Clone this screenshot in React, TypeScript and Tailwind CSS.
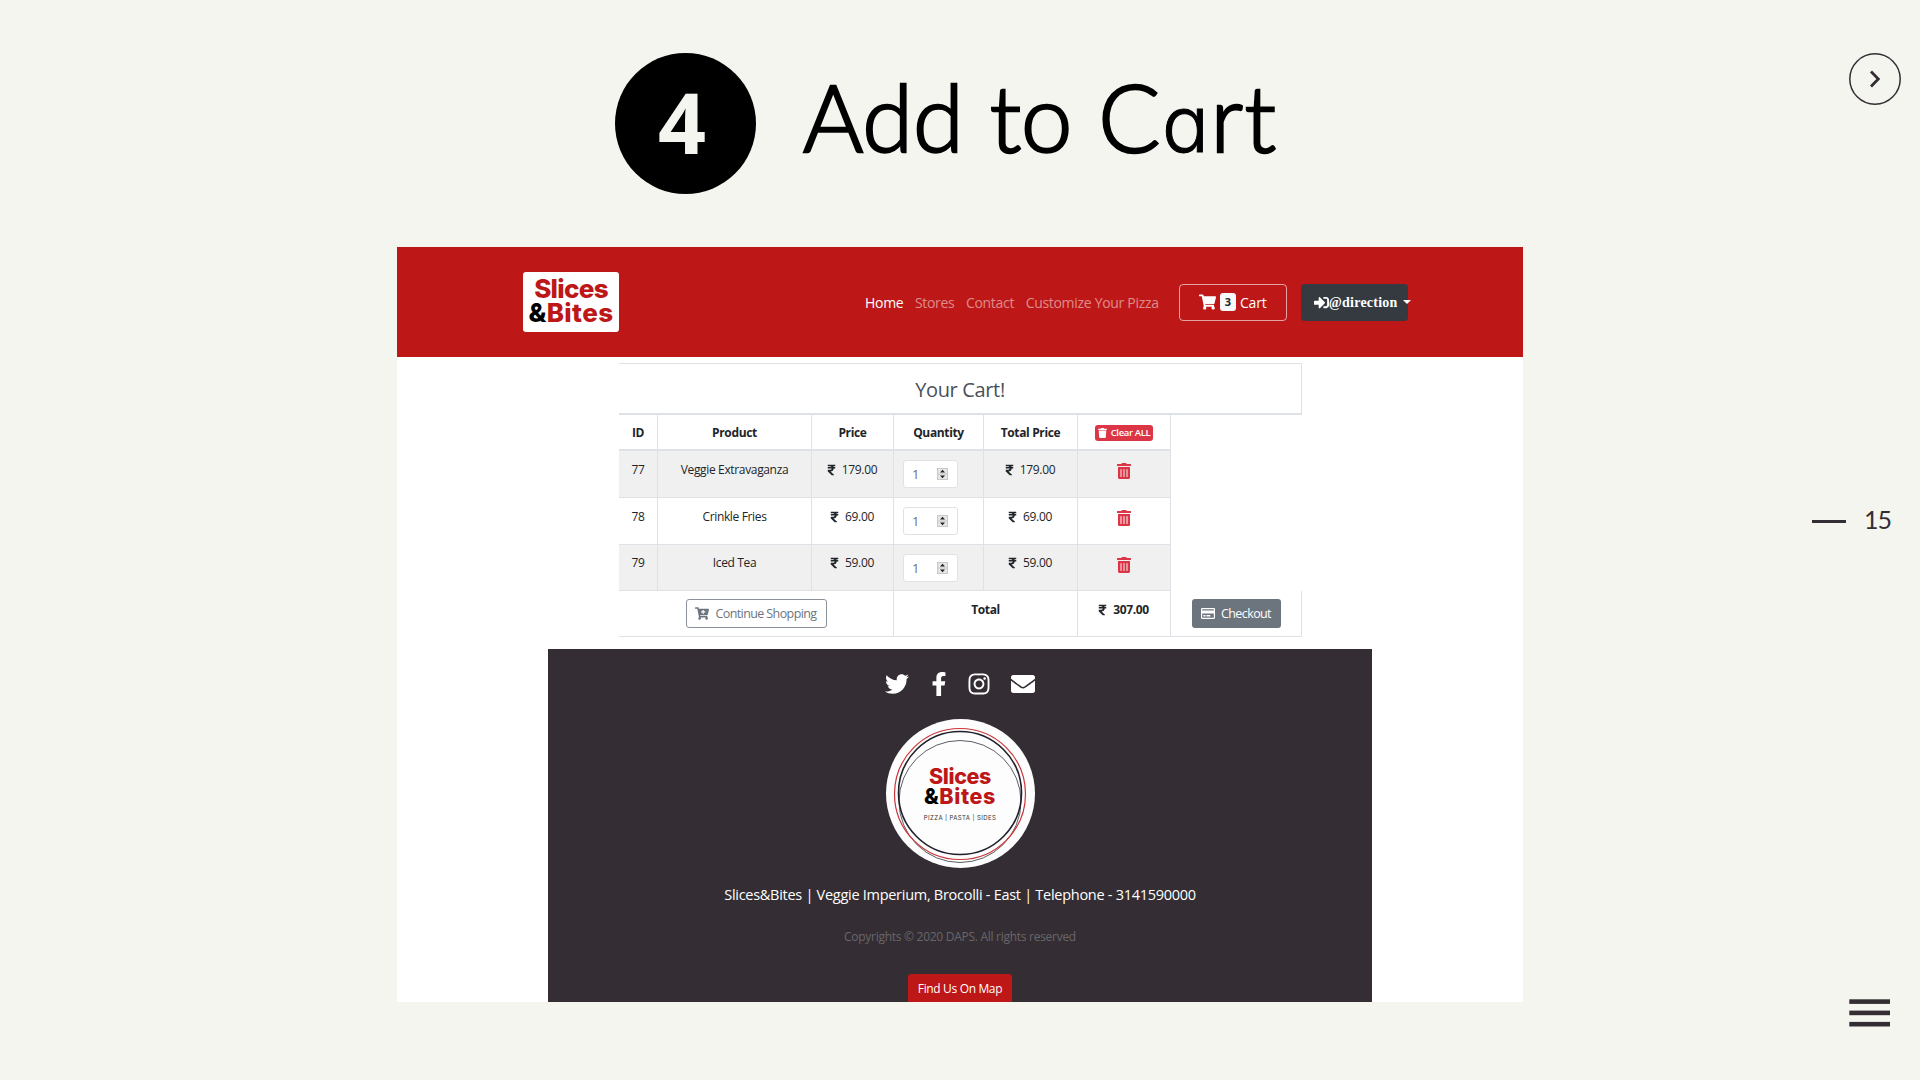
import type { ReactNode } from "react";
import {
  FaShoppingCart, FaSignInAlt, FaTrash, FaTrashAlt, FaRupeeSign, FaCartPlus,
  FaRegCreditCard, FaTwitter, FaFacebookF, FaInstagram, FaEnvelope,
} from "react-icons/fa";

function T({ children, className = "" }: { children: ReactNode; className?: string }) {
  return <span className={`whitespace-nowrap ${className}`}>{children}</span>;
}

const rows = [
  { id: "77", name: "Veggie Extravaganza", price: "179.00", shade: "bg-[#f0f0f0]", height: "h-[47px]", pad: "pt-[10px]" },
  { id: "78", name: "Crinkle Fries", price: "69.00", shade: "bg-white", height: "h-[47px]", pad: "pt-[10px]" },
  { id: "79", name: "Iced Tea", price: "59.00", shade: "bg-[#f0f0f0]", height: "h-[46px]", pad: "pt-[9px]" },
];

function Amount({ value }: { value: string }) {
  return (
    <span className="flex items-center gap-[6px] pr-px">
      <FaRupeeSign className="h-[12px] w-[9px]" />
      <T>{value}</T>
    </span>
  );
}

function Quantity() {
  return (
    <div className="mt-[9px] ml-[9px] flex h-[28px] w-[55px] items-center justify-between rounded-[3px] border border-[#dfe3e7] bg-white pr-[9px] pl-[8px] text-[13px] text-[#6b737b]">
      <T className="pt-[2px]">1</T>
      <svg viewBox="0 0 11 12" className="h-[12px] w-[11px]">
        <rect width="11" height="12" fill="#c9c9c9" />
        <rect x="1" y="1" width="9" height="4.5" fill="#e6e6e6" />
        <rect x="1" y="6.5" width="9" height="4.5" fill="#e6e6e6" />
        <path d="M3 4.6 5.5 1.7 8 4.6ZM3 7.4 5.5 10.3 8 7.4Z" fill="#222" />
      </svg>
    </div>
  );
}

const line = "border-r border-[#dee2e6]";

export default function App() {
  return (
    <main className="flex h-[1080px] w-[1920px] overflow-hidden bg-[#f4f5ef] pl-[397px] font-['Open_Sans',sans-serif] text-black">
      <div className="w-[1126px] shrink-0">
        <header className="flex h-[247px] pt-[53px] pl-[218px]">
          <div className="flex size-[141px] items-center justify-center rounded-full bg-black pr-[7px] pb-[3px] text-[84px] leading-none font-bold text-[#f4f5ef]">
            <T>4</T>
          </div>
          <h1 className="ml-[47px] flex gap-[26px] pt-[9px] font-['Lato',sans-serif] text-[92px] leading-[110px] font-light whitespace-nowrap [-webkit-text-stroke:2.4px_black]">
            <T>Add</T>
            <T>to</T>
            <T className="tracking-[1.5px]">C<span className="font-['Inter',sans-serif] text-[78px] [-webkit-text-stroke:1px_black] [font-feature-settings:'cv11']">a</span>rt</T>
          </h1>
        </header>

        <section className="h-[755px] overflow-hidden bg-white">
          <nav className="flex h-[110px] items-center bg-[#bd1717] pl-[126px] text-[14px] text-white">
            <div className="flex h-[60px] w-[96px] shrink-0 flex-col items-center rounded-[3px] bg-white pt-[5px] font-['Inter',sans-serif] text-[26px] leading-[24px] font-extrabold tracking-[-0.7px] text-[#bd1717]">
              <T>Slices</T>
              <T className="tracking-[0.4px]"><span className="text-black">&amp;</span>Bites</T>
            </div>
            <div className="ml-[246px] flex gap-[11.5px] tracking-[-0.3px] text-white/50">
              <T className="text-white">Home</T>
              <T>Stores</T>
              <T>Contact</T>
              <T>Customize Your Pizza</T>
            </div>
            <div className="ml-[20px] flex h-[37px] w-[108px] shrink-0 items-center justify-center gap-[4px] rounded-[4px] border border-white/60">
              <FaShoppingCart className="h-[16px] w-[17px]" />
              <span className="flex h-[18px] w-[16px] items-center justify-center rounded-[3px] bg-[#f8f9fa] text-[11px] font-bold text-[#212529]">3</span>
              <T className="tracking-[-0.2px]">Cart</T>
            </div>
            <div className="ml-[14px] flex h-[37px] w-[107px] shrink-0 items-center rounded-[4px] bg-[#343a40] pl-[13px] font-['Liberation_Serif',serif] text-[14px] font-bold tracking-[0.25px]">
              <FaSignInAlt className="size-[15px] shrink-0" />
              <T>@direction</T>
              <svg viewBox="0 0 8 4" className="ml-[5px] h-[4px] w-[8px] shrink-0"><path d="M0 0h8L4 4Z" fill="white" /></svg>
            </div>
          </nav>

          <div className="mt-[6px] ml-[222px] w-[683px] text-[12px] tracking-[-0.35px] text-[#212529]">
            <div className="flex h-[52px] items-center justify-center border-t border-r border-b-2 border-[#dee2e6] pt-[2px] text-[20px] text-[#495057]">
              <T>Your Cart!</T>
            </div>
            <div className="grid h-[36px] w-[552px] grid-cols-[39px_154px_82px_90px_94px_93px] border-b-2 border-[#dee2e6] font-bold *:flex *:items-center *:justify-center *:pt-[2px]">
              <div className={line}><T>ID</T></div>
              <div className={line}><T>Product</T></div>
              <div className={line}><T>Price</T></div>
              <div className={line}><T>Quantity</T></div>
              <div className={line}><T>Total Price</T></div>
              <div className={line}>
                <button className="flex h-[16px] w-[58px] items-center justify-center gap-[4px] rounded-[3px] bg-[#dc3545] text-[9.5px] font-semibold text-white">
                  <FaTrash className="h-[10px] w-[9px]" /><T>Clear ALL</T>
                </button>
              </div>
            </div>
            {rows.map((r) => (
              <div key={r.id} className={`grid w-[552px] grid-cols-[39px_154px_82px_90px_94px_93px] border-b border-[#dee2e6] ${r.shade} ${r.height}`}>
                <div className={`flex justify-center ${r.pad} ${line}`}><T>{r.id}</T></div>
                <div className={`flex justify-center ${r.pad} ${line}`}><T>{r.name}</T></div>
                <div className={`flex items-start justify-center ${r.pad} ${line}`}><Amount value={r.price} /></div>
                <div className={line}><Quantity /></div>
                <div className={`flex items-start justify-center ${r.pad} ${line}`}><Amount value={r.price} /></div>
                <div className={`flex justify-center pt-[12px] text-[#dc3545] ${line}`}><FaTrashAlt className="h-[16px] w-[14px]" /></div>
              </div>
            ))}
            <div className="grid h-[46px] grid-cols-[275px_184px_93px_131px] border-b border-[#dee2e6]">
              <div className={`flex justify-center pt-[8px] ${line}`}>
                <button className="flex h-[29px] w-[141px] items-center justify-center gap-[6px] rounded-[3px] border border-[#8b9299] text-[12.5px] tracking-[-0.6px] text-[#6c757d]">
                  <FaCartPlus className="h-[13px] w-[14px]" /><T className="pt-[2px]">Continue Shopping</T>
                </button>
              </div>
              <div className={`flex justify-center pt-[10px] font-bold ${line}`}><T>Total</T></div>
              <div className={`flex items-start justify-center pt-[10px] font-bold ${line}`}><Amount value="307.00" /></div>
              <div className={`flex justify-center pt-[8px] ${line}`}>
                <button className="flex h-[29px] w-[89px] items-center justify-center gap-[6px] rounded-[3px] bg-[#6c757d] text-[12.5px] tracking-[-0.6px] text-white">
                  <FaRegCreditCard className="h-[13px] w-[14px]" /><T className="pt-[2px]">Checkout</T>
                </button>
              </div>
            </div>
          </div>

          <footer className="mt-[12px] ml-[151px] flex h-[354px] w-[824px] flex-col items-center bg-[#342e34] text-white">
            <div className="mt-[23px] flex h-[24px] items-center">
              <FaTwitter className="size-[24px]" />
              <FaFacebookF className="ml-[17.5px] size-[24px]" />
              <FaInstagram className="ml-[16px] size-[24px]" />
              <FaEnvelope className="ml-[20.5px] size-[24px]" />
            </div>
            <div className="relative mt-[23px] flex size-[149px] shrink-0 flex-col items-center rounded-full bg-[#fdfdfd] pt-[47px] font-['Inter',sans-serif] text-[21.5px] leading-[20px] font-extrabold tracking-[-0.4px] text-[#bd1717]">
              <svg viewBox="0 0 149 149" className="absolute inset-0 size-[149px]" fill="none">
                <circle cx="74" cy="82.5" r="61" stroke="#333341" strokeWidth=".8" />
                <circle cx="74" cy="75" r="65.5" stroke="#cb3438" strokeWidth="1.2" />
                <circle cx="74" cy="74" r="61.5" stroke="#20202c" strokeWidth="1.6" />
              </svg>
              <T>Slices</T>
              <T className="tracking-[0.6px]"><span className="text-black">&amp;</span>Bites</T>
              <T className="mt-[2px] text-[6px] font-normal tracking-[.4px] text-[#333]">PIZZA | PASTA | SIDES</T>
            </div>
            <p className="mt-[16px] text-[14.5px] leading-[22px] tracking-[-0.28px]"><T>Slices&amp;Bites | Veggie Imperium, Brocolli - East | Telephone - 3141590000</T></p>
            <p className="mt-[22px] text-[12px] leading-[18px] tracking-[-0.28px] text-[#696669]"><T>Copyrights © 2020 DAPS. All rights reserved</T></p>
            <button className="mt-[28px] h-[30px] w-[104px] shrink-0 rounded-[3px] bg-[#bd1717] text-[12px] tracking-[-0.35px]"><T>Find Us On Map</T></button>
          </footer>
        </section>
      </div>

      <aside className="flex flex-1 flex-col items-end pt-[53px] text-[#342e34]">
        <svg viewBox="0 0 52 52" className="mr-[19px] size-[52px]" fill="none" stroke="currentColor">
          <circle cx="26" cy="26" r="25.2" strokeWidth="1.5" />
          <path d="M22 18.5 29.3 26 22 33.5" strokeWidth="2.8" />
        </svg>
        <div className="mt-[399px] mr-[29px] flex h-[32px] items-center">
          <span className="mt-[2px] mr-[18px] h-[3px] w-[34px] bg-[#342e34]" />
          <T className="font-['Lato',sans-serif] text-[25px] tracking-[-1px]">15</T>
        </div>
        <svg viewBox="0 0 41 28" className="mt-[463px] mr-[30px] h-[28px] w-[41px]" fill="currentColor">
          <rect x="0.3" y="0.3" width="40.7" height="4.6" />
          <rect x="0.3" y="11.6" width="40.7" height="4.6" />
          <rect x="0.3" y="22.9" width="40.7" height="4.6" />
        </svg>
      </aside>
    </main>
  );
}
